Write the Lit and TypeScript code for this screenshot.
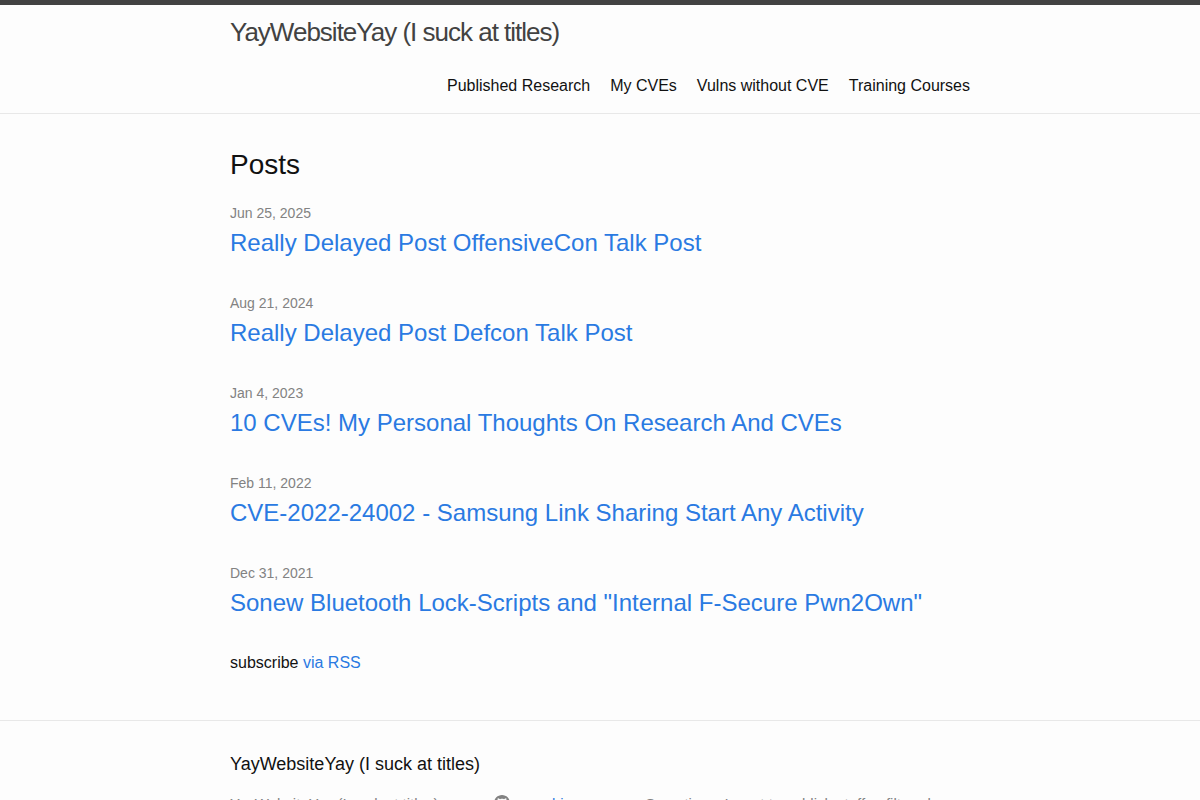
import { LitElement, html, css } from "lit";
import { customElement } from "lit/decorators.js";

interface Post {
  date: string;
  iso: string;
  title: string;
}

const SITE_TITLE = "YayWebsiteYay (I suck at titles)";

const PAGES = ["Published Research", "My CVEs", "Vulns without CVE", "Training Courses"];

const POSTS: Post[] = [
  { date: "Jun 25, 2025", iso: "2025-06-25", title: "Really Delayed Post OffensiveCon Talk Post" },
  { date: "Aug 21, 2024", iso: "2024-08-21", title: "Really Delayed Post Defcon Talk Post" },
  { date: "Jan 4, 2023", iso: "2023-01-04", title: "10 CVEs! My Personal Thoughts On Research And CVEs" },
  { date: "Feb 11, 2022", iso: "2022-02-11", title: "CVE-2022-24002 - Samsung Link Sharing Start Any Activity" },
  { date: "Dec 31, 2021", iso: "2021-12-31", title: 'Sonew Bluetooth Lock-Scripts and "Internal F-Secure Pwn2Own"' },
];

@customElement("app-root")
export class AppRoot extends LitElement {
  static styles = css`
    :host {
      display: flex;
      flex-direction: column;
      min-height: 100vh;
      background: #fdfdfd;
      color: #111;
      font: 400 16px/24px "Liberation Sans", Arial, Helvetica, sans-serif;
    }
    h1, h2, h3, p, ul {
      margin: 0;
      padding: 0;
      font-weight: 400;
    }
    ul {
      list-style: none;
    }
    a {
      color: #2a7ae2;
      text-decoration: none;
    }
    a:hover {
      color: #111;
      text-decoration: underline;
    }
    .wrapper {
      box-sizing: border-box;
      max-width: 800px;
      margin: 0 auto;
      padding: 0 30px;
    }
    .site-header {
      border-top: 5px solid #424242;
      border-bottom: 1px solid #e8e8e8;
      line-height: 54px;
    }
    .site-title {
      display: block;
      color: #424242;
      font-size: 26px;
      font-weight: 300;
      letter-spacing: -1px;
    }
    .site-nav {
      display: flex;
      flex-wrap: wrap;
      justify-content: flex-end;
      gap: 0 20px;
    }
    .page-link {
      color: #111;
    }
    .page-content {
      flex: 1;
      padding: 30px 0 45px;
    }
    .list-heading {
      margin-bottom: 15px;
      font-size: 28px;
      line-height: 42px;
    }
    .post {
      margin-bottom: 30px;
    }
    .post-meta {
      display: block;
      color: #828282;
      font-size: 14px;
    }
    .post-heading {
      font-size: 24px;
      line-height: 36px;
    }
    .site-footer {
      padding: 30px 0;
      border-top: 1px solid #e8e8e8;
    }
    .footer-heading {
      margin-bottom: 15px;
      font-size: 18px;
      line-height: 27px;
    }
    .footer-columns {
      display: grid;
      grid-template-columns: 7fr 4fr 9fr;
      margin-left: -15px;
      color: #828282;
      font-size: 15px;
      line-height: 22px;
    }
    .footer-column {
      padding-left: 15px;
    }
    .icon {
      width: 16px;
      height: 16px;
      padding-right: 5px;
      fill: #828282;
      vertical-align: text-top;
    }
  `;

  render() {
    return html`
      <header class="site-header">
        <div class="wrapper">
          <a class="site-title" href="#">${SITE_TITLE}</a>
          <nav class="site-nav">
            ${PAGES.map((page) => html`<a class="page-link" href="#">${page}</a>`)}
          </nav>
        </div>
      </header>
      <main class="page-content">
        <div class="wrapper">
          <h1 class="list-heading">Posts</h1>
          <ul>
            ${POSTS.map(
              (post) => html`<li class="post">
                <time class="post-meta" datetime=${post.iso}>${post.date}</time>
                <h2 class="post-heading"><a href="#">${post.title}</a></h2>
              </li>`
            )}
          </ul>
          <p>subscribe <a href="#">via RSS</a></p>
        </div>
      </main>
      <footer class="site-footer">
        <div class="wrapper">
          <h2 class="footer-heading">${SITE_TITLE}</h2>
          <div class="footer-columns">
            <div class="footer-column">${SITE_TITLE}</div>
            <div class="footer-column">
              <a href="#"><svg class="icon" viewBox="0 0 16 16" aria-hidden="true">
                <path fill-rule="evenodd" d="M8 0C3.58 0 0 3.58 0 8c0 3.54 2.29 6.53 5.47 7.59.4.07.55-.17.55-.38 0-.19-.01-.82-.01-1.49-2.01.37-2.53-.49-2.69-.94-.09-.23-.48-.94-.82-1.13-.28-.15-.68-.52-.01-.53.63-.01 1.08.58 1.23.82.72 1.21 1.87.87 2.33.66.07-.52.28-.87.51-1.07-1.78-.2-3.64-.89-3.64-3.95 0-.87.31-1.59.82-2.15-.08-.2-.36-1.02.08-2.12 0 0 .67-.21 2.2.82.64-.18 1.32-.27 2-.27s1.36.09 2 .27c1.53-1.04 2.2-.82 2.2-.82.44 1.1.16 1.92.08 2.12.51.56.82 1.27.82 2.15 0 3.07-1.87 3.75-3.65 3.95.29.25.54.73.54 1.48 0 1.07-.01 1.93-.01 2.2 0 .21.15.46.55.38A8.01 8.01 0 0 0 16 8c0-4.42-3.58-8-8-8z" />
              </svg> <span>yogehi</span></a>
            </div>
            <div class="footer-column">Sometimes I want to publish stuff unfiltered</div>
          </div>
        </div>
      </footer>
    `;
  }
}
